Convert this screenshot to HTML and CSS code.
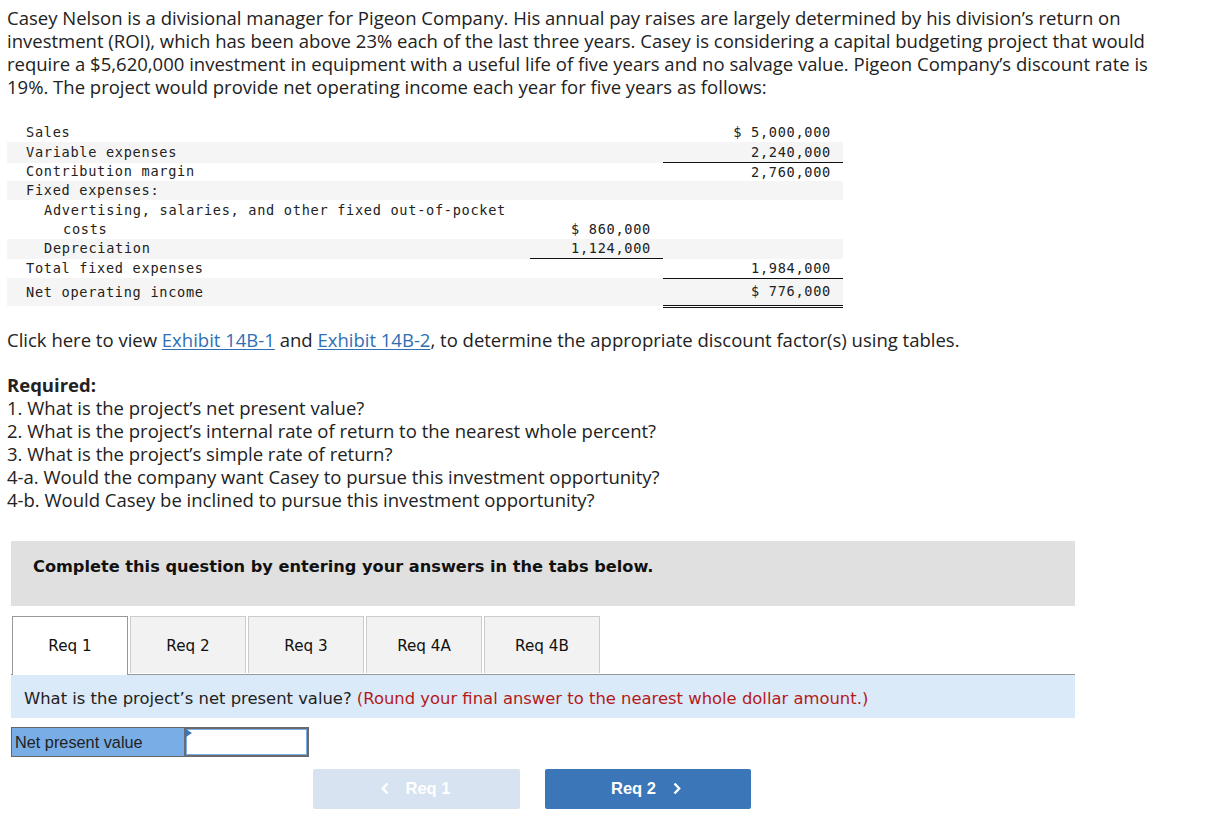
FILE: index.html
```html
<!DOCTYPE html>
<html>
<head>
<meta charset="utf-8">
<link rel="stylesheet" href="styles.css">
</head>
<body>
<div class="page">
  <p class="intro">Casey Nelson is a divisional manager for Pigeon Company. His annual pay raises are largely determined by his division’s return on investment (ROI), which has been above 23% each of the last three years. Casey is considering a capital budgeting project that would require a $5,620,000 investment in equipment with a useful life of five years and no salvage value. Pigeon Company’s discount rate is 19%. The project would provide net operating income each year for five years as follows:</p>

  <table class="stmt">
    <colgroup><col class="c-label"><col class="c-mid"><col class="c-right"></colgroup>
    <tr class="h20"><td class="l0">Sales</td><td></td><td class="num">$ 5,000,000</td></tr>
    <tr class="alt h20"><td class="l0">Variable expenses</td><td></td><td class="num ul">2,240,000</td></tr>
    <tr class="h18"><td class="l0">Contribution margin</td><td></td><td class="num">2,760,000</td></tr>
    <tr class="alt h19"><td class="l0">Fixed expenses:</td><td></td><td></td></tr>
    <tr class="two"><td class="l1">Advertising, salaries, and other fixed out-of-pocket<br><span class="l2">costs</span></td><td class="num bot">$ 860,000</td><td></td></tr>
    <tr class="alt h19"><td class="l1">Depreciation</td><td class="num ul">1,124,000</td><td></td></tr>
    <tr class="h19"><td class="l0">Total fixed expenses</td><td></td><td class="num ul">1,984,000</td></tr>
    <tr class="alt last"><td class="l0">Net operating income</td><td></td><td class="num dbl">$ 776,000</td></tr>
  </table>

  <p class="click">Click here to view <a href="#">Exhibit 14B-1</a> and <a href="#">Exhibit 14B-2</a>, to determine the appropriate discount factor(s) using tables.</p>

  <div class="required">
    <div class="req-title">Required:</div>
    <div>1. What is the project’s net present value?</div>
    <div>2. What is the project’s internal rate of return to the nearest whole percent?</div>
    <div>3. What is the project’s simple rate of return?</div>
    <div>4-a. Would the company want Casey to pursue this investment opportunity?</div>
    <div>4-b. Would Casey be inclined to pursue this investment opportunity?</div>
  </div>

  <div class="panel">
    <div class="complete">Complete this question by entering your answers in the tabs below.</div>
    <div class="tabs">
      <div class="tab active">Req 1</div>
      <div class="tab">Req 2</div>
      <div class="tab">Req 3</div>
      <div class="tab">Req 4A</div>
      <div class="tab">Req 4B</div>
    </div>
    <div class="prompt">What is the project’s net present value? <span class="hint">(Round your final answer to the nearest whole dollar amount.)</span></div>
    <div class="answer">
      <div class="ans-label">Net present value</div>
      <div class="ans-input"><span class="flag"></span></div>
    </div>
    <div class="nav">
      <button class="btn prev"><svg class="chev" width="8" height="13" viewBox="0 0 8 13"><polyline points="6.5,1.5 1.8,6.5 6.5,11.5" fill="none" stroke="#fff" stroke-width="2.4"/></svg><span>Req 1</span></button>
      <button class="btn next"><span>Req 2</span><svg class="chev" width="8" height="13" viewBox="0 0 8 13"><polyline points="1.5,1.5 6.2,6.5 1.5,11.5" fill="none" stroke="#fff" stroke-width="2.4"/></svg></button>
    </div>
  </div>
</div>
</body>
</html>
```

FILE: styles.css
```css
html, body { margin: 0; padding: 0; background: #fff; }
body { font-family: "Open Sans", Lato, sans-serif; color: #222; }
.page { padding: 6px 7px 0 7px; width: 1182px; }

.intro { margin: 0; font-size: 18.5px; line-height: 23px; color: #222; }

.stmt {
  margin-top: 24px;
  border-collapse: collapse;
  font-family: "DejaVu Sans Mono", "Liberation Mono", monospace;
  font-size: 13.6px;
  letter-spacing: 0.7px;
  color: #222;
  width: 836px;
}
.stmt col.c-label { width: 523px; }
.stmt col.c-mid { width: 133px; }
.stmt col.c-right { width: 180px; }
.stmt td { padding: 0; line-height: 17px; vertical-align: middle; white-space: nowrap; }
.stmt tr.h20 td { height: 20px; }
.stmt tr.h19 td { height: 19px; }
.stmt tr.h18 td { height: 18px; }
.stmt tr.alt td { background: #f5f5f5; }
.stmt tr.two td { height: 39px; line-height: 19px; }
.stmt tr.last td { height: 26px; }
.stmt td.l0 { padding-left: 19px; }
.stmt td.l1 { padding-left: 37px; }
.stmt .l2 { padding-left: 19px; }
.stmt td.num { text-align: right; padding-right: 12px; }
.stmt td.bot { vertical-align: bottom; }
.stmt td.ul { border-bottom: 1px solid #111; }
.stmt td.dbl { border-bottom: 3px double #111; }

.click { margin: 20px 0 0 0; font-size: 18.5px; line-height: 23px; }
.click a { color: #2f6fb6; text-decoration: underline; text-underline-offset: 2px; }

.required { margin-top: 22px; font-size: 18.5px; line-height: 23px; }
.req-title { font-weight: 700; }

.panel { margin-top: 30px; padding-left: 4px; width: 1064px; }
.complete {
  background: #e0e0e0;
  height: 65px;
  box-sizing: border-box;
  padding: 16px 0 0 22px;
  font-family: "DejaVu Sans", Verdana, sans-serif;
  font-weight: 700;
  font-size: 16.2px;
  color: #111;
}
.tabs {
  display: flex;
  gap: 2px;
  margin-top: 10px;
  padding-left: 1px;
  border-bottom: 1px solid #999;
  height: 58px;
}
.tab {
  width: 116px;
  height: 57px;
  box-sizing: border-box;
  padding-top: 3px;
  background: #f2f2f2;
  border: 1px solid #ccc;
  border-bottom: none;
  display: flex;
  align-items: center;
  justify-content: center;
  font-family: "DejaVu Sans", Tahoma, sans-serif;
  font-size: 15.2px;
  color: #111;
}
.tab.active {
  background: #fff;
  border-color: #999;
  height: 59px;
  padding-top: 1px;
  margin-bottom: -1px;
  position: relative;
}
.prompt {
  background: #daeaf8;
  height: 43px;
  box-sizing: border-box;
  padding: 14px 0 0 13px;
  font-family: "DejaVu Sans", Tahoma, sans-serif;
  font-size: 16.4px;
  color: #222;
}
.hint { color: #b41a1a; }

.answer {
  display: flex;
  margin-top: 9px;
  height: 30px;
  width: 298px;
}
.ans-label {
  width: 173px;
  box-sizing: border-box;
  background: #79ade6;
  border: 1px solid #666;
  border-right: none;
  font-family: "Liberation Sans", Arial, sans-serif;
  font-size: 16.3px;
  color: #222;
  padding: 5px 0 0 3px;
}
.ans-input {
  flex: 1;
  box-sizing: border-box;
  background: #fff;
  border: 2px solid #6a6a6a;
  position: relative;
  box-shadow: inset 0 0 0 1px #7aaee6;
}
.flag {
  position: absolute;
  left: 0; top: 0;
  width: 0; height: 0;
  border-top: 4px solid transparent;
  border-bottom: 4px solid transparent;
  border-left: 6px solid #3a76b8;
}

.nav { display: flex; gap: 25px; margin-top: 12px; padding-left: 302px; }
.btn {
  width: 207px;
  height: 40px;
  border: none;
  border-radius: 2px;
  font-family: "Liberation Sans", Arial, sans-serif;
  font-weight: 700;
  font-size: 16.5px;
  color: #fff;
  display: flex;
  align-items: center;
  justify-content: center;
  gap: 17px;
}
.btn.prev { background: #d7e3f0; padding-left: 4px; }
.btn.next { background: #3a76b8; width: 206px; padding-left: 2px; }
.chev { display: block; }
```
